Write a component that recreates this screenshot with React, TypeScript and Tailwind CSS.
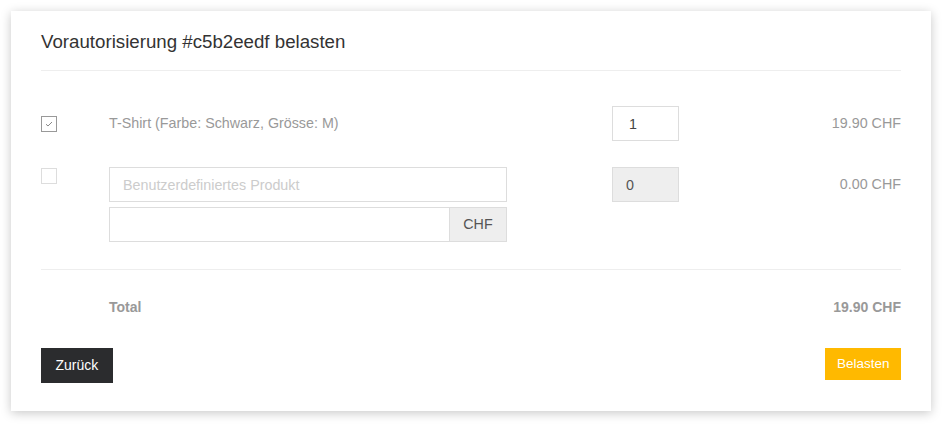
import React from 'react';

const font = { fontFamily: '"Liberation Sans", Arial, sans-serif' };

const Checkbox: React.FC<{ checked?: boolean }> = ({ checked }) => (
  <span
    className={`flex h-4 w-4 items-center justify-center border ${checked ? 'border-[#999]' : 'border-[#ddd]'} bg-white`}
  >
    {checked && (
      <svg width="8" height="6" viewBox="0 0 8 6" fill="none">
        <path d="M1 3.2 L3 5 L7 1" stroke="#888" strokeWidth="1" />
      </svg>
    )}
  </span>
);

export default function App() {
  return (
    <div className="min-h-[431px] bg-white pt-[11px] pl-[11px]" style={font}>
      <div className="w-[920px] bg-white px-[30px] pt-[21px] pb-[28px] shadow-[0_2px_10px_rgba(0,0,0,0.22)]">
        {/* Header */}
        <h1 className="border-b border-[#eee] pb-[18px] text-[18.7px] leading-[20px] text-[#333]">
          Vorautorisierung #c5b2eedf belasten
        </h1>

        {/* Line items */}
        <div className="pt-[35px]">
          <div className="flex items-center">
            <div className="w-[68px]">
              <Checkbox checked />
            </div>
            <div className="w-[398px] text-[14.3px] text-[#999]">T-Shirt (Farbe: Schwarz, Grösse: M)</div>
            <div className="ml-[105px] w-[67px]">
              <input
                defaultValue="1"
                className="h-[35px] w-full border border-[#ddd] px-4 text-[14.3px] text-[#444] outline-none"
              />
            </div>
            <div className="flex-1 text-right text-[14.3px] text-[#999]">19.90 CHF</div>
          </div>

          <div className="mt-[26px] flex items-start">
            <div className="w-[68px] pt-[1px]">
              <Checkbox />
            </div>
            <div className="flex w-[398px] flex-col gap-[5px]">
              <input
                placeholder="Benutzerdefiniertes Produkt"
                className="h-[35px] w-full border border-[#ddd] px-[13px] text-[14.3px] text-[#333] outline-none placeholder:text-[#ccc]"
              />
              <div className="flex h-[35px]">
                <input className="h-full min-w-0 flex-1 border border-[#ddd] px-[13px] text-[14.3px] outline-none" />
                <span className="flex w-[57px] items-center justify-center border border-l-0 border-[#ddd] bg-[#eee] text-[14.3px] text-[#555]">
                  CHF
                </span>
              </div>
            </div>
            <div className="ml-[105px] w-[67px]">
              <input
                defaultValue="0"
                disabled
                className="h-[35px] w-full border border-[#ddd] bg-[#eee] px-[13px] text-[14.3px] text-[#555] outline-none"
              />
            </div>
            <div className="flex-1 text-right text-[14.3px] leading-[35px] text-[#999]">0.00 CHF</div>
          </div>
        </div>

        {/* Total */}
        <div className="mt-[27px] flex border-t border-[#eee] pt-[29px] text-[14px] font-bold text-[#999]">
          <div className="w-[68px]" />
          <div className="flex-1 leading-[16px]">Total</div>
          <div className="leading-[16px]">19.90 CHF</div>
        </div>

        {/* Actions */}
        <div className="mt-[33px] flex items-start justify-between">
          <button className="h-[35px] bg-[#2b2c2e] px-[14.5px] text-[14px] text-white">Zurück</button>
          <button className="h-[32px] bg-[#ffb900] px-[11.5px] text-[13.5px] text-white">Belasten</button>
        </div>
      </div>
    </div>
  );
}
